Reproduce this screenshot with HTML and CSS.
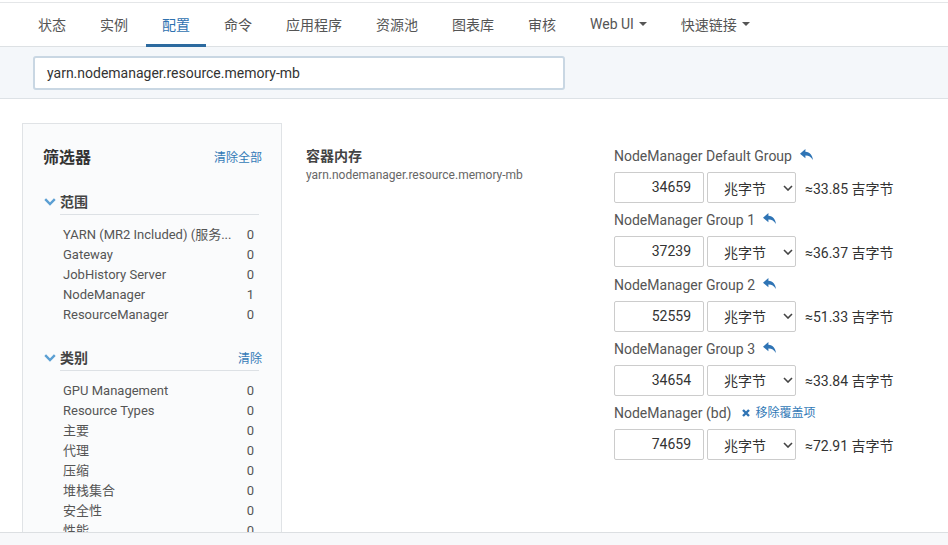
FILE: index.html
```html
<!DOCTYPE html>
<html lang="zh">
<head>
<meta charset="utf-8">
<title>配置</title>
<link rel="stylesheet" href="styles.css">
</head>
<body>
<nav class="nav">
  <a class="nav-item">状态</a>
  <a class="nav-item">实例</a>
  <a class="nav-item active">配置</a>
  <a class="nav-item">命令</a>
  <a class="nav-item">应用程序</a>
  <a class="nav-item">资源池</a>
  <a class="nav-item">图表库</a>
  <a class="nav-item">审核</a>
  <a class="nav-item">Web UI <span class="caret"></span></a>
  <a class="nav-item">快速链接 <span class="caret"></span></a>
</nav>
<div class="search-band">
  <div class="search-input">yarn.nodemanager.resource.memory-mb</div>
</div>
<div class="content">
  <aside class="filters">
    <div class="filters-head">
      <span class="filters-title">筛选器</span>
      <a class="link">清除全部</a>
    </div>
    <div class="section">
      <div class="section-head">
        <span class="section-name"><svg class="chev" viewBox="0 0 12 8" width="12" height="8"><path d="M1.2 1.2 L6 6 L10.8 1.2" fill="none" stroke="#5b9fd3" stroke-width="2.4"/></svg>范围</span>
      </div>
      <ul class="list">
        <li class="row"><span class="name">YARN (MR2 Included) (服务...</span><span class="count">0</span></li>
        <li class="row"><span class="name">Gateway</span><span class="count">0</span></li>
        <li class="row"><span class="name">JobHistory Server</span><span class="count">0</span></li>
        <li class="row"><span class="name">NodeManager</span><span class="count">1</span></li>
        <li class="row"><span class="name">ResourceManager</span><span class="count">0</span></li>
      </ul>
    </div>
    <div class="section">
      <div class="section-head">
        <span class="section-name"><svg class="chev" viewBox="0 0 12 8" width="12" height="8"><path d="M1.2 1.2 L6 6 L10.8 1.2" fill="none" stroke="#5b9fd3" stroke-width="2.4"/></svg>类别</span>
        <a class="link link-right">清除</a>
      </div>
      <ul class="list">
        <li class="row"><span class="name">GPU Management</span><span class="count">0</span></li>
        <li class="row"><span class="name">Resource Types</span><span class="count">0</span></li>
        <li class="row"><span class="name">主要</span><span class="count">0</span></li>
        <li class="row"><span class="name">代理</span><span class="count">0</span></li>
        <li class="row"><span class="name">压缩</span><span class="count">0</span></li>
        <li class="row"><span class="name">堆栈集合</span><span class="count">0</span></li>
        <li class="row"><span class="name">安全性</span><span class="count">0</span></li>
        <li class="row"><span class="name">性能</span><span class="count">0</span></li>
      </ul>
    </div>
  </aside>
  <main class="main">
    <div class="desc">
      <div class="desc-title">容器内存</div>
      <div class="desc-key">yarn.nodemanager.resource.memory-mb</div>
    </div>
    <div class="groups">
      <div class="group">
        <div class="group-label">NodeManager Default Group <svg class="undo" viewBox="0 0 13 11" width="13" height="11"><path d="M5.4 0 L0 4.7 L5.4 9.3 V6.6 C8.6 6.5 10.9 7.7 12.9 11 C12.5 6.3 10 3.2 5.4 2.8 Z" fill="#2f74b5"/></svg></div>
        <div class="controls">
          <div class="num">34659</div>
          <div class="unit">兆字节<svg class="sel-chev" viewBox="0 0 10 6" width="10" height="6"><path d="M1 1 L5 5 L9 1" fill="none" stroke="#444" stroke-width="1.6"/></svg></div>
          <span class="approx">≈33.85 吉字节</span>
        </div>
      </div>
      <div class="group">
        <div class="group-label">NodeManager Group 1 <svg class="undo" viewBox="0 0 13 11" width="13" height="11"><path d="M5.4 0 L0 4.7 L5.4 9.3 V6.6 C8.6 6.5 10.9 7.7 12.9 11 C12.5 6.3 10 3.2 5.4 2.8 Z" fill="#2f74b5"/></svg></div>
        <div class="controls">
          <div class="num">37239</div>
          <div class="unit">兆字节<svg class="sel-chev" viewBox="0 0 10 6" width="10" height="6"><path d="M1 1 L5 5 L9 1" fill="none" stroke="#444" stroke-width="1.6"/></svg></div>
          <span class="approx">≈36.37 吉字节</span>
        </div>
      </div>
      <div class="group">
        <div class="group-label">NodeManager Group 2 <svg class="undo" viewBox="0 0 13 11" width="13" height="11"><path d="M5.4 0 L0 4.7 L5.4 9.3 V6.6 C8.6 6.5 10.9 7.7 12.9 11 C12.5 6.3 10 3.2 5.4 2.8 Z" fill="#2f74b5"/></svg></div>
        <div class="controls">
          <div class="num">52559</div>
          <div class="unit">兆字节<svg class="sel-chev" viewBox="0 0 10 6" width="10" height="6"><path d="M1 1 L5 5 L9 1" fill="none" stroke="#444" stroke-width="1.6"/></svg></div>
          <span class="approx">≈51.33 吉字节</span>
        </div>
      </div>
      <div class="group">
        <div class="group-label">NodeManager Group 3 <svg class="undo" viewBox="0 0 13 11" width="13" height="11"><path d="M5.4 0 L0 4.7 L5.4 9.3 V6.6 C8.6 6.5 10.9 7.7 12.9 11 C12.5 6.3 10 3.2 5.4 2.8 Z" fill="#2f74b5"/></svg></div>
        <div class="controls">
          <div class="num">34654</div>
          <div class="unit">兆字节<svg class="sel-chev" viewBox="0 0 10 6" width="10" height="6"><path d="M1 1 L5 5 L9 1" fill="none" stroke="#444" stroke-width="1.6"/></svg></div>
          <span class="approx">≈33.84 吉字节</span>
        </div>
      </div>
      <div class="group">
        <div class="group-label">NodeManager (bd) <a class="remove"><svg class="x" viewBox="0 0 8 8" width="8" height="8"><path d="M1 1 L7 7 M7 1 L1 7" stroke="#2f74b5" stroke-width="2.4"/></svg>移除覆盖项</a></div>
        <div class="controls">
          <div class="num">74659</div>
          <div class="unit">兆字节<svg class="sel-chev" viewBox="0 0 10 6" width="10" height="6"><path d="M1 1 L5 5 L9 1" fill="none" stroke="#444" stroke-width="1.6"/></svg></div>
          <span class="approx">≈72.91 吉字节</span>
        </div>
      </div>
    </div>
  </main>
</div>
<footer class="footer"></footer>
</body>
</html>
```
FILE: styles.css
```css
* { box-sizing: border-box; }
html, body { margin: 0; padding: 0; }
body {
  padding-top: 2px;
  font-family: Roboto, "Noto Sans CJK SC", sans-serif;
  color: #333;
  background: #fff;
  overflow: hidden;
  height: 545px;
}
a { text-decoration: none; cursor: pointer; }
ul { list-style: none; margin: 0; padding: 0; }

.nav {
  display: flex;
  padding-left: 22px;
  height: 45px;
  border-top: 1px solid #e4e6e8;
  border-bottom: 1px solid #dde1e4;
}
.nav-item {
  display: flex;
  align-items: center;
  padding: 0 16px;
  margin-right: 2px;
  height: 44px;
  font-size: 14px;
  color: #555;
  border-bottom: 3px solid transparent;
  margin-bottom: -1px;
  padding-top: 1px;
}
.nav-item.active {
  color: #2f72b0;
  border-bottom-color: #2c6a9f;
}
.caret {
  display: inline-block;
  width: 0; height: 0;
  margin-left: 5px;
  border-left: 4px solid transparent;
  border-right: 4px solid transparent;
  border-top: 4px solid #555;
}

.search-band {
  background: #f4f7fa;
  border-bottom: 1px solid #dde2e6;
  padding: 9px 0 8px 33px;
}
.search-input {
  width: 532px;
  height: 34px;
  border: 2px solid #c9d7e3;
  border-radius: 3px;
  background: #fff;
  padding-left: 12px;
  font-size: 14px;
  line-height: 30px;
  color: #333;
}

.content {
  display: flex;
  align-items: flex-start;
  padding: 24px 0 0 22px;
}
.filters {
  width: 260px;
  flex: none;
  background: #fafbfc;
  border: 1px solid #e0e3e6;
  padding: 21px 19px 0 20px;
  height: 422px;
  overflow: hidden;
}
.filters-head {
  display: flex;
  justify-content: space-between;
  align-items: center;
  height: 22px;
  margin-bottom: 24px;
}
.filters-title { font-size: 16px; font-weight: bold; color: #333; }
.link { color: #337ab7; font-size: 12px; }
.link-right { margin-right: -3px; }
.section-head {
  display: flex;
  justify-content: space-between;
  align-items: center;
  height: 24px;
  padding-bottom: 3px;
  border-bottom: 1px solid #dde1e5;
  margin-left: 17px;
  margin-right: 3px;
  position: relative;
}
.section-name {
  font-size: 14px;
  font-weight: bold;
  color: #444;
}
.chev {
  position: absolute;
  left: -16px;
  top: 7px;
}
.list {
  margin: 10px 0 22px 20px;
  padding-right: 8px;
}
.row {
  display: flex;
  height: 20px;
  line-height: 20px;
  font-size: 13px;
  color: #555;
}
.name {
  flex: 1;
  min-width: 0;
  white-space: nowrap;
  margin-right: 8px;
}
.count {
  width: 12px;
  text-align: right;
  flex: none;
}

.main {
  display: flex;
  padding: 23px 0 0 24px;
}
.desc { width: 308px; flex: none; }
.desc-title {
  font-size: 14px;
  font-weight: bold;
  color: #444;
  line-height: 20px;
}
.desc-key {
  font-size: 12px;
  color: #666;
  line-height: 16px;
  margin-top: 1px;
}
.groups { display: flex; flex-direction: column; }
.group { margin-bottom: 7.25px; }
.group-label {
  display: flex;
  align-items: center;
  font-size: 14px;
  color: #555;
  line-height: 20px;
  height: 20px;
  margin-bottom: 6px;
}
.undo { margin-left: 8px; margin-top: -3px; }
.remove {
  display: inline-flex;
  align-items: center;
  margin-left: 11px;
  font-size: 12px;
  color: #337ab7;
}
.x { margin-right: 5px; }
.controls {
  display: flex;
  align-items: center;
}
.num {
  width: 90px;
  height: 31px;
  border: 1px solid #ccc;
  border-radius: 2px;
  background: #fff;
  text-align: right;
  padding-right: 12px;
  font-size: 14px;
  line-height: 29px;
  color: #333;
}
.unit {
  width: 89px;
  height: 31px;
  margin-left: 3px;
  border: 1px solid #ccc;
  border-radius: 2px;
  background: #fff;
  display: flex;
  align-items: center;
  padding-left: 16px;
  font-size: 14px;
  color: #333;
}
.sel-chev { margin-left: 17px; }
.approx {
  margin-left: 9px;
  font-size: 14px;
  color: #333;
}

.footer {
  position: fixed;
  left: 0; right: 0; bottom: 0;
  height: 13px;
  background: #f7f8fa;
  border-top: 1px solid #dcdfe2;
}
```
